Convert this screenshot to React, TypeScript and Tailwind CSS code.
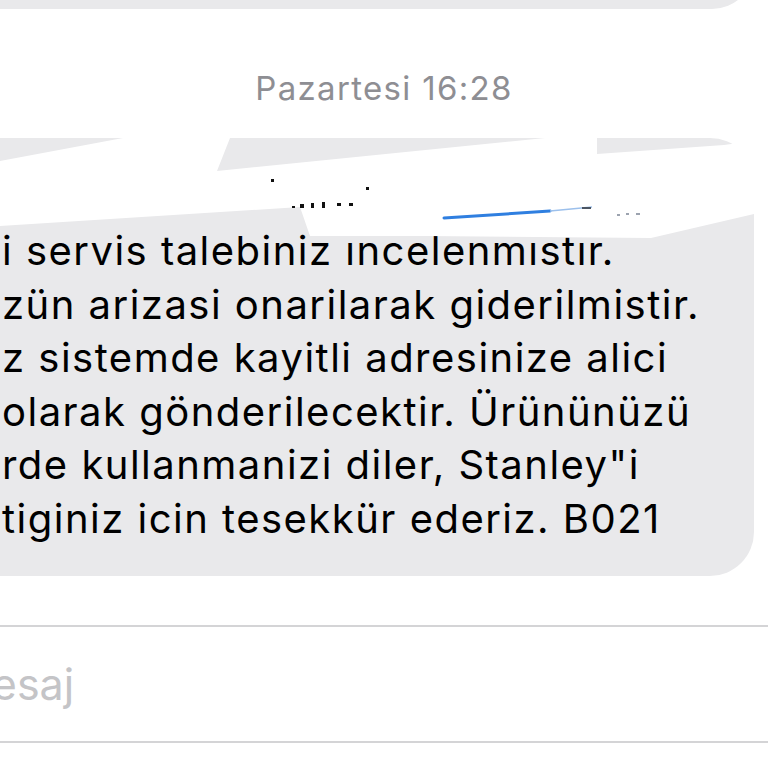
const lines = [
  "i servis talebiniz ıncelenmıstır.",
  "zün arizasi onarilarak giderilmistir.",
  "z sistemde kayitli adresinize alici",
  "olarak gönderilecektir. Ürününüzü",
  "rde kullanmanizi diler, Stanley\"i",
  "tiginiz icin tesekkür ederiz. B021",
];

function Redaction() {
  // white marker strokes that hide the sender line at the top of the bubble
  return (
    <svg
      className="pointer-events-none absolute left-0 top-[130px] h-[120px] w-[768px]"
      viewBox="0 130 768 120"
    >
      <polygon
        fill="#ffffff"
        points="0,161 123,138 230,138 217,171 545,138 597,138 597,154 724,145 760,140 768,140 768,214 754,214 651,238 427,236 310,236 300,207 0,226"
      />
      <g fill="#111111">
        <rect x="271" y="179" width="3" height="3" />
        <rect x="366" y="187" width="3" height="3" />
        <rect x="292" y="206" width="3" height="2" />
        <rect x="300" y="204" width="4" height="4" />
        <rect x="311" y="203" width="3" height="5" />
        <rect x="322" y="202" width="3" height="6" />
        <rect x="337" y="203" width="4" height="3" />
        <rect x="349" y="203" width="4" height="3" />
      </g>
      <path d="M444 218 L550 211" stroke="#2f7fe0" strokeWidth="3" strokeLinecap="round" />
      <path d="M550 211 L592 207" stroke="#9cc0ec" strokeWidth="1.5" />
      <rect x="582" y="207" width="9" height="2" fill="#4b5563" />
      <g fill="#9ca3af">
        <rect x="617" y="214" width="3" height="2" />
        <rect x="626" y="213" width="3" height="2" />
        <rect x="636" y="213" width="4" height="2" />
      </g>
    </svg>
  );
}

export default function App() {
  return (
    <div className="relative h-[768px] w-[768px] overflow-hidden bg-white font-['Inter',sans-serif]">
      <div className="flex flex-col">
        <div className="-mt-[51px] ml-[-100px] mr-[14px] h-[60px] rounded-br-[42px] bg-[#e9e9eb]" />

        <div className="mt-[59px] h-[40px] text-center text-[33px] leading-[40px] tracking-[0.04em] text-[#8e8e93]">
          Pazartesi 16:28
        </div>

        <div className="mt-[30px] ml-[-100px] mr-[14px] rounded-[44px] rounded-tl-none bg-[#e9e9eb] pb-[31px] pl-[102px] pt-[86px]">
          {lines.map((l) => (
            <div key={l} className="whitespace-pre text-[40px] leading-[53.5px] tracking-[0.037em] text-black">
              {l}
            </div>
          ))}
        </div>

        <div className="mt-[49px] ml-[-47px] flex h-[118px] items-center border-y-2 border-[#d4d4d6] bg-white">
          <span className="text-[43px] leading-none text-[#c4c4c7]">Mesaj</span>
        </div>
      </div>
      <Redaction />
    </div>
  );
}
